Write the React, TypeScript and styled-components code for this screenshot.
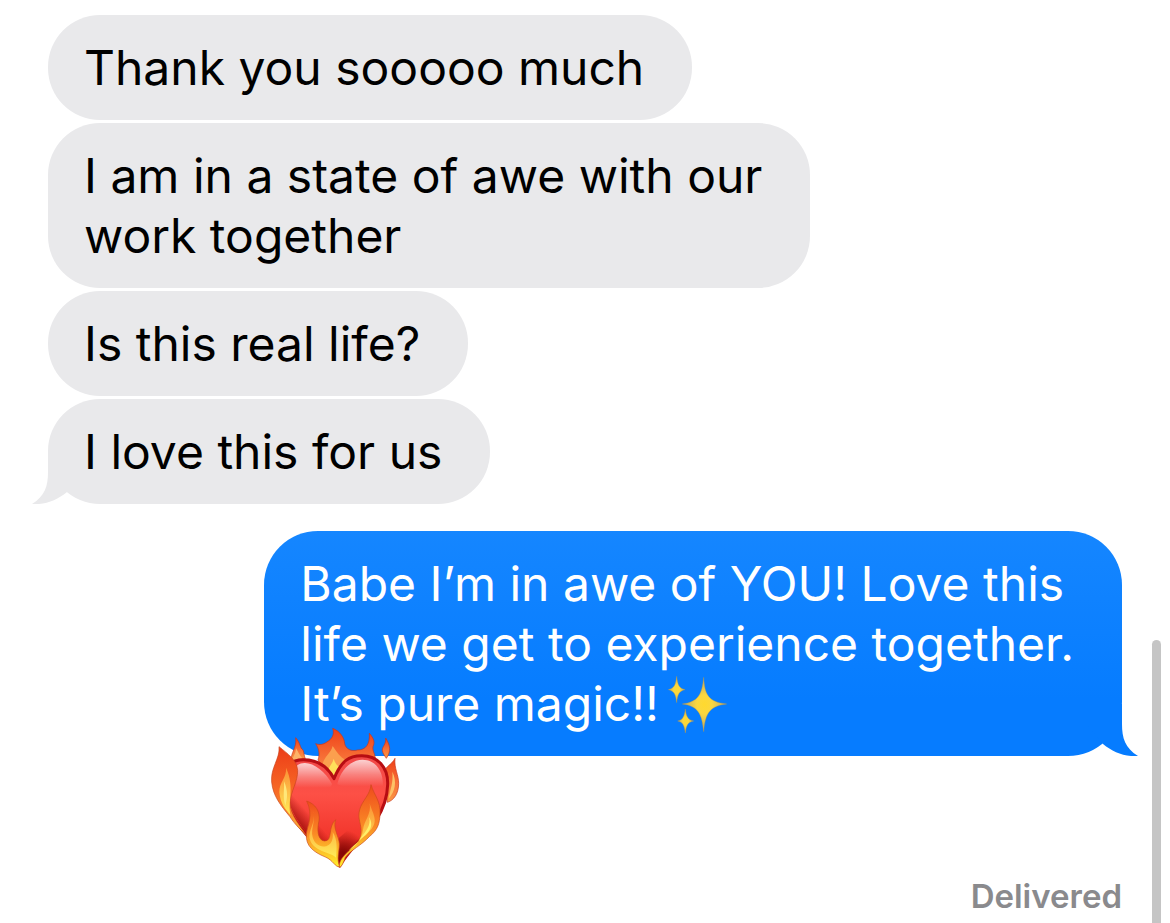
import React from "react";
import styled, { createGlobalStyle, css } from "styled-components";

const GlobalStyle = createGlobalStyle`
  *, *::before, *::after { box-sizing: border-box; }
  body {
    margin: 0;
    background: #fff;
    font-family: Inter, "Liberation Sans", sans-serif;
  }
`;

const Conversation = styled.main`
  position: relative;
  display: flex;
  flex-direction: column;
  min-height: 100vh;
  padding: 15px 48px 0;
  overflow: hidden;
`;

const Group = styled.section<{ $mine?: boolean }>`
  display: flex;
  flex-direction: column;
  align-items: ${(p) => (p.$mine ? "flex-end" : "flex-start")};
  gap: 3px;
  margin-top: ${(p) => (p.$mine ? "27px" : "0")};
`;

const received = css`
  background: #e9e9eb;
  color: #000;
  border-radius: 52px;
`;

const sent = css`
  background: linear-gradient(#1586ff, #067cff 75%);
  color: #fff;
  border-radius: 54px;
`;

const Bubble = styled.div<{ $mine?: boolean }>`
  position: relative;
  max-width: 860px;
  padding: 23px 48px 22px 36px;
  ${(p) => (p.$mine ? sent : received)}
`;

const Text = styled.p`
  margin: 0;
  font-size: 48px;
  line-height: 60px;
  white-space: pre;
`;

const TailShape = styled.svg<{ $mine?: boolean }>`
  position: absolute;
  bottom: 0;
  width: 50px;
  height: 52px;
  ${(p) => (p.$mine ? "right: -16px; transform: scaleX(-1);" : "left: -16px;")}
  fill: ${(p) => (p.$mine ? "#067cff" : "#e9e9eb")};
`;

const SparkleIcon = styled.svg`
  width: 63px;
  height: 60px;
  margin-left: 6px;
  vertical-align: top;
`;

const Reaction = styled.svg`
  position: absolute;
  left: 6px;
  bottom: -115px;
  width: 130px;
  height: 144px;
`;

const Status = styled.p`
  margin: 120px 0 0;
  align-self: flex-end;
  color: #8a8a8d;
  font-size: 33px;
  font-weight: 600;
  line-height: 40px;
`;

const ScrollThumb = styled.div`
  position: absolute;
  top: 640px;
  right: 9px;
  bottom: 0;
  width: 9px;
  border-radius: 5px 5px 0 0;
  background: #c5c5c5;
`;

function Tail({ mine }: { mine?: boolean }) {
  return (
    <TailShape $mine={mine} viewBox="0 0 50 52" aria-hidden="true">
      <path d="M16 0V20C16 34 13 44 0 52C14 53 25 48 35 40L50 22V0Z" />
    </TailShape>
  );
}

function Sparkles() {
  return (
    <SparkleIcon viewBox="20 10 189 180" role="img" aria-label="sparkles">
      <defs>
        <radialGradient id="gold">
          <stop offset="0" stopColor="#ffd92e" />
          <stop offset="0.35" stopColor="#fbd73f" />
          <stop offset="1" stopColor="#b9a56c" />
        </radialGradient>
      </defs>
      <g fill="url(#gold)" stroke="#c99a35" strokeWidth="1">
        <path d="M136 20C139 70 148 94 205 100C152 106 141 130 136 183C131 130 120 106 72 100C120 94 131 72 136 20Z" />
        <path d="M55 17C58 43 62 53 80 57C62 61 58 70 55 96C52 70 48 61 30 57C48 53 52 43 55 17Z" />
        <path d="M81 115C84 138 88 147 106 151C88 155 84 164 81 187C78 164 74 155 58 151C74 147 78 138 81 115Z" />
      </g>
    </SparkleIcon>
  );
}

function HeartOnFire() {
  return (
    <Reaction viewBox="30 21 390 432" role="img" aria-label="heart on fire">
      <defs>
        <linearGradient id="flameBack" x1="0" y1="0" x2="0" y2="1">
          <stop offset="0" stopColor="#ee3f16" />
          <stop offset="0.6" stopColor="#f8753a" />
          <stop offset="1" stopColor="#fb9a42" />
        </linearGradient>
        <linearGradient id="flameSide" x1="0" y1="0" x2="0" y2="1">
          <stop offset="0" stopColor="#ec3c18" />
          <stop offset="0.5" stopColor="#f76a25" />
          <stop offset="1" stopColor="#fbb63a" />
        </linearGradient>
        <linearGradient id="flameFront" x1="0" y1="0" x2="0" y2="1">
          <stop offset="0" stopColor="#ee4a1c" />
          <stop offset="0.5" stopColor="#fa8a25" />
          <stop offset="1" stopColor="#fff02c" />
        </linearGradient>
        <linearGradient id="flameCore" x1="0" y1="0" x2="0" y2="1">
          <stop offset="0" stopColor="#fb8f35" />
          <stop offset="1" stopColor="#ffed58" />
        </linearGradient>
        <linearGradient id="heartFill" x1="0" y1="0" x2="0" y2="1">
          <stop offset="0" stopColor="#f04848" />
          <stop offset="0.35" stopColor="#fd5046" />
          <stop offset="0.75" stopColor="#f2352b" />
          <stop offset="1" stopColor="#8d0906" />
        </linearGradient>
        <linearGradient id="gloss" x1="0" y1="0" x2="0" y2="1">
          <stop offset="0" stopColor="#fff" stopOpacity="0.75" />
          <stop offset="0.5" stopColor="#fff" stopOpacity="0.3" />
          <stop offset="0.9" stopColor="#fff" stopOpacity="0" />
        </linearGradient>
        <linearGradient id="shadeLeft" gradientUnits="userSpaceOnUse" x1="105" y1="320" x2="148" y2="282">
          <stop offset="0" stopColor="#980b08" />
          <stop offset="1" stopColor="#980b08" stopOpacity="0" />
        </linearGradient>
        <radialGradient id="shadeTip" gradientUnits="userSpaceOnUse" cx="250" cy="400" r="70">
          <stop offset="0" stopColor="#840604" />
          <stop offset="1" stopColor="#840604" stopOpacity="0" />
        </radialGradient>
      </defs>

      {/* flames behind the heart */}
      <g fill="url(#flameBack)" stroke="#c83318" strokeWidth="2">
        <path d="M94 120C92 98 111 83 107 53C122 70 119 83 129 90C133 99 131 105 136 116Z" />
        <path d="M174 120C181 98 175 84 167 71C180 76 190 73 199 67C217 57 224 43 218 25C241 34 253 54 254 71C257 86 274 96 292 90C319 90 330 71 328 40C342 55 345 68 339 79C336 91 344 99 346 114L222 188Z" />
        <path d="M377 54C391 76 394 93 379 115C372 105 368 99 367 91C366 80 379 73 377 54Z" />
        <path d="M405 115C402 145 416 165 416 190C416 220 402 241 382 247L372 158C378 136 395 135 405 115Z" />
      </g>
      <path d="M218 78C213 99 193 109 188 132L222 181L257 121C240 111 230 96 218 78Z" fill="#fb9f4e" />
      <path d="M221 116C217 132 207 139 204 153L222 175L240 143C229 135 224 127 221 116Z" fill="#ffe05a" />
      <path d="M108 85C107 103 98 110 99 119L127 115C119 107 114 95 108 85Z" fill="#fdb268" />
      <path d="M397 155C400 188 392 202 386 236C405 215 412 185 397 155Z" fill="#fdc267" />

      {/* heart */}
      <path
        d="M222 176C244 122 268 107 304 107C352 106 385 142 383 194C381 278 324 336 280 382C261 406 248 421 239 438C222 418 191 393 154 360C110 313 78 269 73 209C67 151 83 119 130 119C174 119 205 143 222 176Z"
        fill="url(#heartFill)"
        stroke="#b70d12"
        strokeWidth="9"
        strokeLinejoin="round"
      />
      <path
        d="M222 182C244 130 272 115 304 115C346 115 374 146 375 193C374 272 318 332 239 430C150 360 83 284 81 209C75 152 90 126 130 126C170 126 202 148 222 182Z"
        fill="url(#shadeLeft)"
      />
      <path
        d="M300 300L325 330L239 430L200 385Z"
        fill="url(#shadeTip)"
      />
      <path d="M112 136C142 115 191 145 216 192C213 215 150 215 107 205C107 170 104 150 112 136Z" fill="url(#gloss)" />
      <path d="M232 193C243 141 285 112 321 121C351 128 370 155 369 200C325 212 276 212 232 193Z" fill="url(#gloss)" />

      {/* left flame */}
      <path
        d="M57 80C61 115 31 143 35 186C39 229 63 257 89 289C106 316 126 332 141 349C123 320 91 286 90 248C92 214 114 184 113 151C110 119 84 102 57 80Z"
        fill="url(#flameSide)"
        stroke="#c9451d"
        strokeWidth="2"
      />
      <path d="M78 143C81 173 57 186 58 217C61 252 77 268 92 286C81 248 106 204 78 143Z" fill="url(#flameCore)" />
      <path d="M72 184C74 211 67 224 76 257C82 236 85 213 72 184Z" fill="#ffe779" />

      {/* front flames */}
      <path
        d="M140 243C166 252 181 273 177 303C171 326 172 360 193 363C220 364 202 320 227 299C218 327 237 347 238 372C238 396 229 416 239 440C226 443 219 420 196 411C160 396 137 378 139 343C142 316 161 286 140 243Z"
        fill="url(#flameFront)"
        stroke="#cd481b"
        strokeWidth="2"
      />
      <path d="M158 270C169 307 151 323 158 352C165 377 189 387 207 374C220 366 219 346 218 336C234 360 230 390 228 413C210 393 160 397 149 356C145 327 170 307 158 270Z" fill="url(#flameCore)" />
      <path
        d="M333 194C342 225 363 244 360 282C359 309 354 329 329 349C303 377 274 389 256 412C252 424 247 437 239 443C235 423 249 410 266 393C285 375 300 365 303 339C306 314 291 297 299 269C305 244 331 224 333 194Z"
        fill="url(#flameFront)"
        stroke="#cd481b"
        strokeWidth="2"
      />
      <path d="M329 250C338 281 355 301 335 326C315 352 287 367 266 392C293 375 306 354 309 330C312 302 335 283 329 250Z" fill="url(#flameCore)" />
      <path d="M327 291C335 316 315 337 298 359C321 344 346 322 327 291Z" fill="#fff06a" />
    </Reaction>
  );
}

const incoming = [
  "Thank you sooooo much",
  "I am in a state of awe with our\nwork together",
  "Is this real life?",
  "I love this for us",
];

export default function App() {
  return (
    <>
      <GlobalStyle />
      <Conversation>
        <Group>
          {incoming.map((message, i) => (
            <Bubble key={message}>
              {i === incoming.length - 1 && <Tail />}
              <Text>{message}</Text>
            </Bubble>
          ))}
        </Group>
        <Group $mine>
          <Bubble $mine>
            <Tail mine />
            <Text>
              {"Babe I’m in awe of YOU! Love this\nlife we get to experience together.\nIt’s pure magic!!"}
              <Sparkles />
            </Text>
            <HeartOnFire />
          </Bubble>
        </Group>
        <Status>Delivered</Status>
        <ScrollThumb />
      </Conversation>
    </>
  );
}
